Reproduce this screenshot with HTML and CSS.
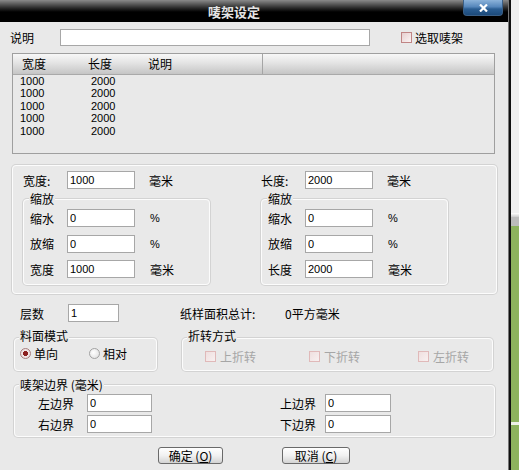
FILE: index.html
```html
<!DOCTYPE html>
<html>
<head>
<meta charset="utf-8">
<link rel="stylesheet" href="styles.css">
</head>
<body>
<div class="screen">
  <div class="dialog">
    <div class="titlebar">
      <div class="title">唛架设定</div>
      <div class="close"><svg width="9" height="8" viewBox="0 0 9 8"><path d="M1 0.5 L8 7.5 M8 0.5 L1 7.5" stroke="#fff" stroke-width="2.2"/></svg></div>
    </div>

    <div class="row-desc">
      <span class="lbl-desc">说明</span>
      <input class="inp inp-desc" type="text" value="">
      <span class="chk chk-red"></span>
      <span class="chk-text">选取唛架</span>
    </div>

    <div class="list">
      <div class="list-head"><span class="h1">宽度</span><span class="h2">长度</span><span class="h3">说明</span><span></span></div>
      <div class="list-row"><span class="c1">1000</span><span class="c2">2000</span><span></span></div>
      <div class="list-row"><span class="c1">1000</span><span class="c2">2000</span><span></span></div>
      <div class="list-row"><span class="c1">1000</span><span class="c2">2000</span><span></span></div>
      <div class="list-row"><span class="c1">1000</span><span class="c2">2000</span><span></span></div>
      <div class="list-row"><span class="c1">1000</span><span class="c2">2000</span><span></span></div>
    </div>

    <div class="box group-size">
      <div class="size-col">
        <div class="size-top"><span class="lbl-top">宽度:</span><input class="inp w68" type="text" value="1000"><span class="unit">毫米</span></div>
        <div class="box box-scale">
          <span class="legend lg-scale">缩放</span>
          <div class="scale-rows">
            <div class="srow"><span class="lbl-s">缩水</span><input class="inp w68" type="text" value="0"><span class="unit pct">%</span></div>
            <div class="srow"><span class="lbl-s">放缩</span><input class="inp w68" type="text" value="0"><span class="unit pct">%</span></div>
            <div class="srow"><span class="lbl-s">宽度</span><input class="inp w68" type="text" value="1000"><span class="unit">毫米</span></div>
          </div>
        </div>
      </div>
      <div class="size-col">
        <div class="size-top"><span class="lbl-top">长度:</span><input class="inp w68" type="text" value="2000"><span class="unit">毫米</span></div>
        <div class="box box-scale">
          <span class="legend lg-scale">缩放</span>
          <div class="scale-rows">
            <div class="srow"><span class="lbl-s">缩水</span><input class="inp w68" type="text" value="0"><span class="unit pct">%</span></div>
            <div class="srow"><span class="lbl-s">放缩</span><input class="inp w68" type="text" value="0"><span class="unit pct">%</span></div>
            <div class="srow"><span class="lbl-s">长度</span><input class="inp w68" type="text" value="2000"><span class="unit">毫米</span></div>
          </div>
        </div>
      </div>
    </div>

    <div class="row-layers">
      <span class="lbl-layers">层数</span>
      <input class="inp w51" type="text" value="1">
      <span class="area-lbl">纸样面积总计:</span>
      <span class="area-val">0平方毫米</span>
    </div>

    <div class="mode-row">
      <div class="box box-mode">
        <span class="legend lg-high">料面模式</span>
        <div class="radios">
          <span class="radio checked"></span><span class="rtext">单向</span>
          <span class="radio radio2"></span><span class="rtext">相对</span>
        </div>
      </div>
      <div class="box box-fold">
        <span class="legend lg-high">折转方式</span>
        <div class="folds">
          <div class="fitem f1"><span class="chk chk-dis"></span><span class="dis-text">上折转</span></div>
          <div class="fitem f2"><span class="chk chk-dis"></span><span class="dis-text">下折转</span></div>
          <div class="fitem"><span class="chk chk-dis"></span><span class="dis-text">左折转</span></div>
        </div>
      </div>
    </div>

    <div class="box box-border">
      <span class="legend">唛架边界 (毫米)</span>
      <div class="bcols">
        <div class="bcol bcol-left">
          <div class="brow"><span class="lbl-bl">左边界</span><input class="inp w65" type="text" value="0"></div>
          <div class="brow"><span class="lbl-bl">右边界</span><input class="inp w65" type="text" value="0"></div>
        </div>
        <div class="bcol">
          <div class="brow"><span class="lbl-br">上边界</span><input class="inp w66" type="text" value="0"></div>
          <div class="brow"><span class="lbl-br">下边界</span><input class="inp w66" type="text" value="0"></div>
        </div>
      </div>
    </div>

    <div class="buttons">
      <div class="btn btn-ok">确定 (<u>O</u>)</div>
      <div class="btn btn-cancel">取消 (<u>C</u>)</div>
    </div>
  </div>
  <div class="edge"></div>
  <div class="outside">
    <div class="out-top"></div>
    <div class="out-line"></div>
    <div class="out-bar"></div>
    <div class="out-green"></div>
    <div class="out-sep"></div>
    <div class="out-green2"></div>
  </div>
</div>
</body>
</html>
```

FILE: styles.css
```css
* { box-sizing: border-box; }
body {
  margin: 0;
  font-family: "Noto Sans CJK SC", "Liberation Sans", sans-serif;
  font-size: 12px;
  color: #000;
}
.screen { display: flex; width: 519px; height: 470px; overflow: hidden; }
.dialog { width: 508px; background: #e9e9e9; display: flex; flex-direction: column; }
.edge { width: 3px; background: linear-gradient(to right, #777 0, #777 1px, #111 1px); }
.outside { flex: 1; display: flex; flex-direction: column; }
.out-top { height: 213px; background: #efefef; }
.out-line { height: 4px; background: linear-gradient(#fff, #ccc); }
.out-bar { height: 9px; background: #bcbcbc; }
.out-green { height: 196px; background: #8db35e; }
.out-sep { height: 3px; background: #eef2e8; }
.out-green2 { flex: 1; background: #8db35e; }

/* title bar */
.titlebar {
  height: 22px;
  display: flex;
  background: linear-gradient(#8a8a8a 0, #2a2a2a 8px, #000 12px);
}
.title {
  flex: 1;
  text-align: center;
  padding-left: 5px;
  line-height: 24px;
  color: #e4e4e4;
  font-weight: bold;
  font-size: 13px;
}
.close {
  width: 40px;
  height: 16px;
  margin-right: 5px;
  border-radius: 0 0 4px 4px;
  background: linear-gradient(#8cb3da, #5687bb 45%, #2b5e93 60%, #1c4a7a);
  border: 1px solid #3a5f86;
  border-top: 0;
  display: flex;
  align-items: center;
  justify-content: center;
}

/* common inputs */
.inp {
  height: 18px;
  border: 1px solid #a7a7a7;
  background: #fff;
  padding: 0 2px;
  margin: 0;
  font-family: "Liberation Sans", sans-serif;
  font-size: 11px;
  color: #000;
  outline: none;
}
.w68 { width: 68px; }
.w51 { width: 51px; }
.w65 { width: 65px; }
.w66 { width: 66px; }

.chk {
  display: inline-block;
  width: 11px;
  height: 11px;
  flex: none;
}
.chk-red {
  border: 1px solid #c08585;
  background: linear-gradient(135deg, #e6cfcf, #fbf4f4);
}
.chk-dis {
  border: 1px solid #e0b9b9;
  background: linear-gradient(135deg, #efdfdf, #f8f0f0);
}

/* row 1 */
.row-desc {
  display: flex;
  align-items: center;
  margin-top: 7px;
  height: 17px;
  padding-left: 10px;
}
.lbl-desc { width: 50px; }
.inp-desc { width: 310px; height: 17px; }
.row-desc .chk { margin-left: 31px; }
.chk-text { margin-left: 3px; }

/* list */
.list {
  margin: 7px 0 0 12px;
  width: 483px;
  height: 101px;
  border: 1px solid #9f9f9f;
  background: #e9e9e9;
}
.list-head {
  height: 21px;
  display: grid;
  grid-template-columns: 66px 60px 124px 1fr;
  background: linear-gradient(#f7f7f7, #e6e6e6 40%, #c5c5c5);
  border-bottom: 1px solid #a9a9a9;
  line-height: 20px;
}
.list-head span { padding-left: 9px; }
.list-head .h3 { border-right: 1px solid #a5a5a5; }
.list-row {
  display: grid;
  grid-template-columns: 66px 60px 1fr;
  line-height: 12.4px;
  font-family: "Liberation Sans", sans-serif;
  font-size: 11px;
}
.list-row:first-of-type { margin-top: 1px; }
.list-row .c1 { padding-left: 7px; }
.list-row .c2 { padding-left: 12px; }

/* group boxes */
.box {
  border: 1px solid #fcfcfc;
  box-shadow: 0 0 0 1px #d3d3d3;
  border-radius: 4px;
}
.legend {
  display: block;
  width: max-content;
  margin: -8px 0 0 4px;
  padding: 0 1px;
  line-height: 14px;
  background: #e9e9e9;
}
.lg-scale { margin-left: 5px; }
.lg-high { margin-top: -10px; }

.group-size {
  margin: 11px 0 0 12px;
  width: 485px;
  padding: 5px 0 8px 10px;
  display: grid;
  grid-template-columns: 238px 1fr;
}
.size-top { display: flex; align-items: center; height: 18px; }
.lbl-top { width: 44px; }
.unit { margin-left: 14px; }
.pct { font-family: "Liberation Sans", sans-serif; font-size: 11px; margin-left: 15px; }
.box-scale { margin-top: 10px; width: 187px; }
.scale-rows {
  display: flex;
  flex-direction: column;
  gap: 7.5px;
  margin-top: 3px;
  padding: 0 0 6px 6px;
}
.srow { display: flex; align-items: center; height: 18px; }
.lbl-s { width: 37px; }
.srow .unit { margin-left: 15px; }

/* layers row */
.row-layers {
  display: flex;
  align-items: center;
  height: 18px;
  margin-top: 10px;
  padding-left: 20px;
}
.lbl-layers { width: 48px; }
.area-lbl { margin-left: 61px; width: 105px; }

/* mode row */
.mode-row { display: flex; margin-top: 16px; }
.box-mode { margin-left: 14px; width: 143px; height: 33px; }
.box-fold { margin-left: 25px; width: 311px; height: 33px; }
.radios {
  display: flex;
  align-items: center;
  height: 12px;
  margin-top: 4px;
  padding-left: 5px;
}
.radio {
  width: 11px;
  height: 11px;
  border-radius: 50%;
  border: 1px solid #a3a3a3;
  background: radial-gradient(circle at 40% 40%, #fff, #dcdcdc);
  flex: none;
}
.radio.checked {
  border-color: #a88080;
  background: radial-gradient(circle, #8c1f1f 0, #8c1f1f 2.3px, #f2e6e6 2.8px, #e6d6d6);
}
.rtext { margin-left: 3px; }
.radio2 { margin-left: 31px; }
.folds {
  display: flex;
  align-items: center;
  height: 12px;
  margin-top: 7px;
  padding-left: 22px;
}
.fitem { display: flex; align-items: center; }
.f1 { width: 104px; }
.f2 { width: 109px; }
.dis-text { margin-left: 4px; color: #a6a6a6; }

/* border group */
.box-border { margin: 14px 0 0 14px; width: 481px; }
.bcols { display: flex; padding: 0 0 3px 23px; margin-top: 2px; }
.bcol { display: flex; flex-direction: column; gap: 3px; }
.bcol-left { width: 242px; }
.brow { display: flex; align-items: center; height: 18px; }
.lbl-bl { width: 49px; }
.lbl-br { width: 45px; }

/* buttons */
.buttons { display: flex; margin-top: 10px; padding-left: 158px; gap: 59px; }
.btn {
  height: 17px;
  border: 1px solid #6a6a6a;
  border-radius: 3px;
  background: linear-gradient(#ffffff, #f1f1f1 50%, #d3d3d3);
  line-height: 15px;
  text-align: center;
  font-size: 12px;
}
.btn-ok { width: 65px; }
.btn-cancel { width: 68px; }
```
